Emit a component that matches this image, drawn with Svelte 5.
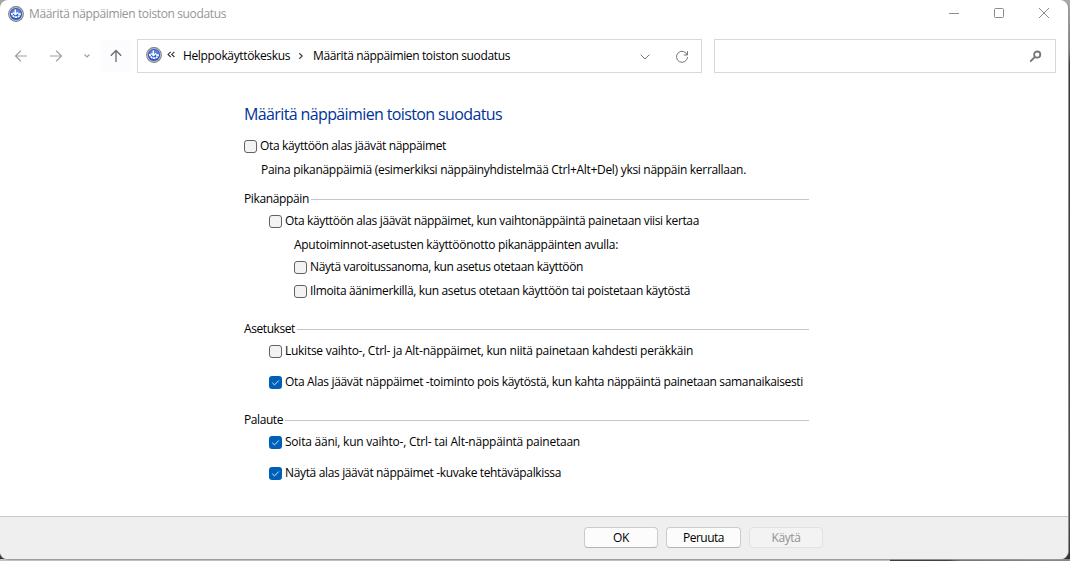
<script>
  // Tunes the tracking of a label so that it occupies the given width.
  function fit(node, width) {
    const natural = node.getBoundingClientRect().width;
    node.style.letterSpacing = `${(width - natural) / node.textContent.length}px`;
  }

  const title = 'Määritä näppäimien toiston suodatus';

  const rows = [
    { kind: 'check', level: 0, gap: 11, width: 186, on: false, text: 'Ota käyttöön alas jäävät näppäimet' },
    { kind: 'note', level: 0, gap: 7, width: 485, text: 'Paina pikanäppäimiä (esimerkiksi näppäinyhdistelmää Ctrl+Alt+Del) yksi näppäin kerrallaan.' },
    { kind: 'group', level: 0, gap: 12, width: 65, text: 'Pikanäppäin' },
    { kind: 'check', level: 1, gap: 5, width: 414, on: false, text: 'Ota käyttöön alas jäävät näppäimet, kun vaihtonäppäintä painetaan viisi kertaa' },
    { kind: 'note', level: 1, gap: 7, width: 324, text: 'Aputoiminnot-asetusten käyttöönotto pikanäppäinten avulla:' },
    { kind: 'check', level: 2, gap: 5, width: 273, on: false, text: 'Näytä varoitussanoma, kun asetus otetaan käyttöön' },
    { kind: 'check', level: 2, gap: 7, width: 380, on: false, text: 'Ilmoita äänimerkillä, kun asetus otetaan käyttöön tai poistetaan käytöstä' },
    { kind: 'group', level: 0, gap: 21, width: 51, text: 'Asetukset' },
    { kind: 'check', level: 1, gap: 5, width: 408, on: false, text: 'Lukitse vaihto-, Ctrl- ja Alt-näppäimet, kun niitä painetaan kahdesti peräkkäin' },
    { kind: 'check', level: 1, gap: 14, width: 518, on: true, text: 'Ota Alas jäävät näppäimet -toiminto pois käytöstä, kun kahta näppäintä painetaan samanaikaisesti' },
    { kind: 'group', level: 0, gap: 21, width: 39, text: 'Palaute' },
    { kind: 'check', level: 1, gap: 5, width: 295, on: true, text: 'Soita ääni, kun vaihto-, Ctrl- tai Alt-näppäintä painetaan' },
    { kind: 'check', level: 1, gap: 14, width: 276, on: true, text: 'Näytä alas jäävät näppäimet -kuvake tehtäväpalkissa' }
  ];
</script>

{#snippet logo()}
  <svg class="logo" width="16" height="16" viewBox="0 0 16 16">
    <circle cx="8" cy="8" r="7.9" fill="#77787c" />
    <circle cx="8" cy="8" r="7.1" fill="#b9bac0" />
    <circle cx="8" cy="8" r="6.1" fill="#2c58c8" />
    <path d="M3 6.5a5.3 5.3 0 0 1 10 0L8 9z" fill="#5c82dc" />
    <path d="M3.8 7a4.3 4.3 0 0 0 8.4 1.2" fill="none" stroke="#fff" stroke-width="1.8" stroke-dasharray="2.2 .5" />
    <path d="M7.3 3.4v5M5.2 6.4l2.3 2.2 2.5-2.4M10 8h3" fill="none" stroke="#fff" stroke-width="1.4" />
  </svg>
{/snippet}

<div class="window">
  <header class="titlebar">
    {@render logo()}
    <span class="caption"><span use:fit={197}>{title}</span></span>
    <div class="controls">
      <svg width="12" height="12"><path d="M1 6.5h10" /></svg>
      <svg width="12" height="12"><rect x="1.5" y="1.5" width="9" height="9" rx="1" /></svg>
      <svg width="12" height="12"><path d="M1 1l10 10M11 1L1 11" /></svg>
    </div>
  </header>

  <nav>
    <div class="arrows">
      <svg width="14" height="14"><path d="M13 7H1.5M6.8 1.8L1.5 7l5.3 5.2" /></svg>
      <svg width="14" height="14"><path d="M1 7h11.5M7.2 1.8L12.5 7l-5.3 5.2" /></svg>
      <svg class="small" width="8" height="8"><path d="M1.5 2.5L4 5l2.5-2.5" /></svg>
      <div class="up"><svg width="14" height="14"><path d="M7 13V1.5M1.8 6.8L7 1.5l5.2 5.3" /></svg></div>
    </div>
    <div class="address">
      {@render logo()}
      <svg class="back" width="8" height="7"><path d="M3.7.8L1 3.4 3.7 6M7.4.8L4.7 3.4 7.4 6" /></svg>
      <span class="crumb"><span use:fit={107}>Helppokäyttökeskus</span></span>
      <svg class="sep" width="6" height="8"><path d="M1.3 1.2L4.2 4 1.3 6.8" /></svg>
      <span class="crumb"><span use:fit={197}>{title}</span></span>
      <svg class="drop" width="10" height="8"><path d="M.7 1.7L5 6l4.3-4.3" /></svg>
      <svg class="reload" width="14" height="14"><path d="M12.2 5A5.5 5.5 0 1 0 12.5 7M12.5 1.2V5H8.8" /></svg>
    </div>
    <div class="search">
      <svg width="13" height="13"><circle cx="8.2" cy="4.6" r="3.1" /><path d="M5.8 7L1.2 11.6" /></svg>
    </div>
  </nav>

  <main>
    <h1><span use:fit={258}>{title}</span></h1>
    {#each rows as row}
      <div class="row {row.kind} level{row.level}" style:margin-top="{row.gap}px">
        {#if row.kind === 'check'}
          <span class="box" class:on={row.on}>
            {#if row.on}<svg width="13" height="13"><path d="M3.3 6.8l2.2 2.1 4.3-4.4" /></svg>{/if}
          </span>
        {/if}
        <span class="label" use:fit={row.width}>{row.text}</span>
        {#if row.kind === 'group'}<i></i>{/if}
      </div>
    {/each}
  </main>

  <footer>
    <button><span use:fit={16}>OK</span></button>
    <button class="wide"><span use:fit={41}>Peruuta</span></button>
    <button disabled><span use:fit={29}>Käytä</span></button>
  </footer>
</div>

<style>
  :global(body) {
    height: 561px;
    overflow: hidden;
    background:
      linear-gradient(90deg, #c4c4c4 890px, #3a322a 890px, #40382f 948px, #77736f 960px, #8b8886) 0 559px / 1070px 2px no-repeat,
      linear-gradient(#aaa, #8a9090 28px, #6a7274 52px, #30332f 64px, #3b3531 300px, #514944 500px, #332d29);
  }
  .window {
    display: flex;
    flex-direction: column;
    width: 1068px;
    height: 559px;
    border-radius: 8px;
    overflow: hidden;
    background: #fff;
    box-shadow: 0 0 1px 1px #999;
    font: 12px/17px "Open Sans", "Noto Sans", sans-serif;
    color: #000;
  }
  svg { fill: none; stroke: #777; flex: none; }
  .logo { stroke: none; }
  span { white-space: nowrap; }
  .titlebar { display: flex; align-items: center; height: 27px; padding: 0 18px 0 8px; }
  .caption { margin-left: 5px; color: #959595; }
  .controls { display: flex; gap: 33px; margin-left: auto; margin-top: -1px; }
  .controls svg { stroke: #8b8b8b; }
  nav { display: flex; height: 34px; margin-top: 12px; }
  .arrows { display: flex; align-items: center; width: 137px; padding-left: 14px; box-sizing: border-box; }
  .arrows svg { stroke: #a0a0a0; stroke-width: 1.2; }
  .arrows svg + svg { margin-left: 21px; }
  .arrows svg.small { margin-left: 20px; }
  .up { display: grid; place-items: center; width: 32px; height: 32px; margin-left: 9px; background: #fcfcff; }
  .arrows .up svg { stroke: #6b6b6b; stroke-width: 1.3; }
  .address { display: flex; align-items: center; width: 565px; padding: 0 12px 0 8px; box-sizing: border-box; border: 1px solid #d9d9d9; }
  .address .logo { margin-top: -2px; }
  .back { margin: -3px 0 0 5px; stroke: #333; stroke-width: 1.1; }
  .crumb { height: 17px; margin: -2px 0 0 8px; }
  .sep { margin: 0 1px 0 8px; stroke: #444; stroke-width: 1.2; }
  .drop { margin: 2px 0 0 auto; }
  .reload { margin: 2px 0 0 25px; }
  .search { display: flex; align-items: center; justify-content: flex-end; width: 342px; margin-left: 12px; padding-right: 13px; box-sizing: border-box; border: 1px solid #d9d9d9; }
  .search svg { stroke: #777; stroke-width: 1.8; }
  main { flex: 1; width: 565px; margin-left: 244px; padding-top: 30px; }
  h1 { margin: 0; height: 24px; font-size: 16px; line-height: 22px; font-weight: 400; color: #003399; }
  .row { display: flex; align-items: center; height: 17px; }
  .label { margin-top: -2px; }
  .level1 { padding-left: 25px; }
  .level2 { padding-left: 50px; }
  .note.level0 { padding-left: 17px; }
  .note.level1 { padding-left: 50px; }
  .box { flex: none; width: 13px; height: 13px; box-sizing: border-box; margin-right: 3px; border: 1px solid #626262; border-radius: 3px; background: #f3f3f3; }
  .on { border: 0; background: #005fb8; }
  .on svg { display: block; stroke: #d5e7f7; }
  .group i { flex: 1; height: 1px; margin-left: 2px; background: #c6c6c6; }
  footer { display: flex; gap: 8px; height: 43px; padding: 10px 0 0 584px; box-sizing: border-box; border-top: 1px solid #c9c9c9; background: #efefef; }
  button { width: 74px; height: 21px; box-sizing: border-box; padding: 0; border: 1px solid #cbcbcb; border-bottom-color: #b5b5b5; border-radius: 4px; background: #fcfcfc; font: inherit; line-height: 17px; color: #000; }
  .wide { width: 75px; }
  button:disabled { border-color: #e1e1e1; background: #f3f3f3; color: #929292; }
</style>
